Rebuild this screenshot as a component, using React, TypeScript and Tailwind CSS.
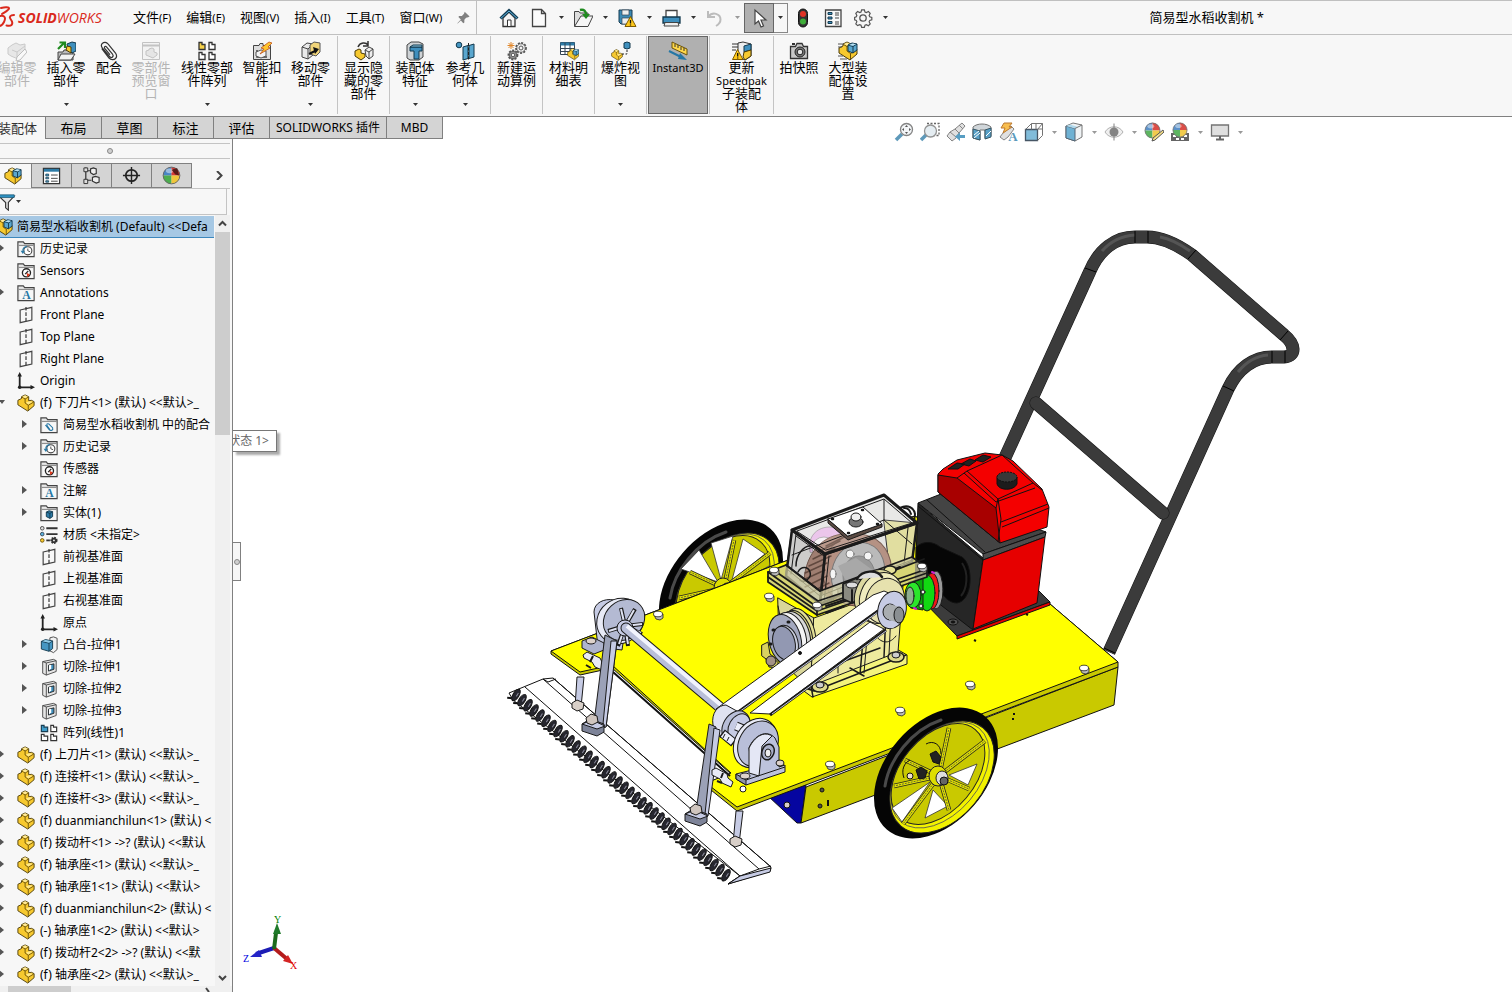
import { useState } from 'react';
import type { ReactNode } from 'react';
import clsx from 'clsx';

type IconProps = { name: string; size?: number };

const Cube = () => (
  <>
    <path d="M10 4l4-2 5 1v6l-4 3-5-2z" fill="#5aa7cf" stroke="#12384d" />
    <path d="M10 4l5 1.500 4-2.500M15 5.500V12" fill="none" stroke="#12384d" />
    <path d="M11 4l4-1.500 3 .8-3 1.500z" fill="#b9e0f2" />
  </>
);

const PartShape = () => (
  <>
    <path d="M1 7l4-2V3l4-2 4 2v4.500L16 7l3 1.500V13l-7 6L1 12z" fill="#f7c92f" stroke="#4a3a08" strokeLinejoin="round" />
    <path d="M5.500 3.500L9 5.500v4.500l3.500 2.500L18.500 9M12.500 12.500V18M9 5.500L12.500 3.500" fill="none" stroke="#6b5208" />
    <path d="M6 3l3-1.500L12 3 9 4.800z" fill="#ffeb9a" />
    <path d="M10 9.500l3.500-1.500 4 .5-5 3.200z" fill="#ffe98c" />
  </>
);

const FolderShape = () => (
  <>
    <path d="M1 18.500V2H7L8.500 4H19V18.500z" fill="#e8e8e8" stroke="#444" strokeWidth="1.300" />
    <path d="M2 6h16" stroke="#777" />
    <path d="M3 7h15v10.500H3z" fill="#f7f7f7" />
  </>
);

const Ball = () => (
  <>
    <path d="M10 10V1a9 9 0 0 0-9 9z" fill="#4a86c5" />
    <path d="M10 10V1a9 9 0 0 1 9 9z" fill="#d83a34" />
    <path d="M10 10H1a9 9 0 0 0 9 9z" fill="#4cae4f" />
    <path d="M10 10h9a9 9 0 0 1-9 9z" fill="#f0c63a" />
    <circle cx="10" cy="10" r="8.800" fill="none" stroke="#666" />
    <ellipse cx="8" cy="5" rx="4" ry="2.500" fill="#fff" opacity=".45" />
  </>
);

const GearShape = ({ x, y, s, fill }: { x: number; y: number; s: number; fill: string }) => (
  <g>
    <circle cx={x} cy={y} r={s} fill={fill} stroke="#555" strokeWidth="1.800" strokeDasharray="2 1.300" />
    <circle cx={x} cy={y} r={s - 0.800} fill={fill} stroke="#555" strokeWidth=".8" />
    <circle cx={x} cy={y} r={s / 2.500} fill="#f7f7f7" stroke="#555" />
  </g>
);

const ICONS: Record<string, ReactNode> = {
  part: <PartShape />,
  assembly: (
    <>
      <PartShape />
      <Cube />
    </>
  ),
  editPart: (
    <g opacity=".35">
      <path d="M1 7l4-3 4-2 4 2 5-1v10l-7 5-7-3-3-2z" fill="#ccc" stroke="#777" />
      <path d="M5 9l5 2v6M10 11l8-6" fill="none" stroke="#777" />
      <path d="M18 8l-8 8-1 4 4-1 7-8z" fill="#fff" stroke="#555" />
    </g>
  ),
  insertPart: (
    <>
      <path d="M2 19V11h5l1-2h6l1 2h2v8z" fill="#bbb" stroke="#444" />
      <path d="M2 19l3-6h14l-4 6z" fill="#f2f2f2" stroke="#444" />
      <path d="M2 8l6-6M3.500 1.500H9V7" fill="none" stroke="#1f8a1f" strokeWidth="2.200" />
      <path d="M11 3l5-2 4 1v8l-4 2-4-4z" fill="#3f8fbd" stroke="#12384d" />
      <path d="M11 5l4 1v6l-5-3z" fill="#f7c92f" stroke="#4a3a08" />
    </>
  ),
  clip: (
    <path
      d="M3 8l7 9c2 2 5 2 6.500.5 1.500-1.500 1.300-3.500 0-5.500L9 3C7.500 1 5 .8 3.500 2.200c-1.500 1.300-1.300 3.300 0 5l7 8.300c1 1.200 2.200 1.300 3 .5.900-.8.800-1.900 0-3L7.500 6C7 5.300 6.200 5.200 5.700 5.700c-.5.500-.4 1.100 0 1.700l5 6"
      fill="none"
      stroke="#333"
      strokeWidth="1.200"
      strokeLinecap="round"
    />
  ),
  preview: (
    <g opacity=".4">
      <path d="M1.500 1.500h17v17h-17z" fill="#eee" stroke="#777" />
      <path d="M2 4.500h16" stroke="#777" strokeWidth="2" />
      <path d="M5 10l3-1V8l3-1 2 1v3l3 1v2l-4 3-7-3z" fill="#ccc" stroke="#777" />
    </g>
  ),
  pattern: (
    <>
      <path d="M2 1.500h3v2h3v5H2z" fill="#f7d24a" stroke="#333" strokeWidth="1.300" />
      <path d="M12 1.500h3v2h3v5h-6zM2 11.500h3v2h3v5H2zM12 11.500h3v2h3v5h-6z" fill="#fff" stroke="#333" strokeWidth="1.300" />
    </>
  ),
  linearPattern: (
    <>
      <path d="M1.500 1.500h3v2h4v5h-7z" fill="#3f9cc9" stroke="#173d52" strokeWidth="1.300" />
      <path d="M12 1.500h3v2h3.500v5H12zM1.500 11.500h3v2h4v5h-7zM12 11.500h3v2h3.500v5H12z" fill="#fff" stroke="#333" strokeWidth="1.300" />
    </>
  ),
  fastener: (
    <>
      <path d="M1.500 18.500V4.500H7l1-2h3v2h7.500v14z" fill="#ddd" stroke="#444" />
      <path d="M5 9v7h10" fill="none" stroke="#444" strokeWidth="1.500" />
      <path d="M4 11l5-2 5 1v5l-5 2-5-2z" fill="#f4f4f4" stroke="#555" />
      <path d="M17 1l3 1-4 4 2 1-10 6 4-5-3-1z" fill="#ffc62c" stroke="#c0501a" strokeWidth=".8" />
    </>
  ),
  move: (
    <>
      <path d="M1 6l5-4 6 1v11l-5 4-6-2z" fill="#e9e9e9" stroke="#444" />
      <path d="M1 6l6 2 5-5M7 8v10" fill="none" stroke="#444" />
      <path d="M9 4l4-3 6 1v9l-4 4-6-2z" fill="#f1d57a" stroke="#555" />
      <path d="M8 13l8-4" fill="none" stroke="#111" strokeWidth="2" />
      <path d="M12 6l6 2-4 5z" fill="#111" />
    </>
  ),
  showHide: (
    <>
      <path d="M4 6c2-5 8-5 10-2M14 0v5H9" fill="none" stroke="#333" strokeWidth="1.500" />
      <path d="M1 10l4-2 2 1v3l4 1v3l-4 3-6-4z" fill="#f7c92f" stroke="#4a3a08" />
      <path d="M11 9l4-3 4 2v7l-4 3-3-3z" fill="#eee" stroke="#444" />
      <path d="M15 11v7M11 9l4 2 4-3" fill="none" stroke="#444" />
    </>
  ),
  feature: (
    <>
      <path d="M2 4l4-3h8l4 2v13l-4 3H5l-3-2z" fill="#cfd3d6" stroke="#444" />
      <path d="M5 6h12v4h-3v8H9v-8H5z" fill="#3f8fbd" stroke="#12384d" />
      <path d="M5 6l3-2h9v2z" fill="#93cbe6" stroke="#12384d" />
    </>
  ),
  reference: (
    <>
      <circle cx="4" cy="4" r="2.800" fill="#4596c2" stroke="#12384d" />
      <path d="M8 6l5-1.500v13L8 19z" fill="#5aa7cf" stroke="#12384d" />
      <path d="M14 4.500L19 3v13l-5 1.500z" fill="#5aa7cf" stroke="#12384d" />
      <path d="M13.500 2v18" stroke="#222" strokeDasharray="3 1.500" />
    </>
  ),
  motion: (
    <>
      <GearShape x={14} y={7} s={5} fill="#f4f4f4" />
      <GearShape x={6} y={14} s={4.500} fill="#999" />
      <path d="M4 1v7M.5 4.500h7M1.500 2l5 5M6.500 2l-5 5" stroke="#e0862a" />
    </>
  ),
  bom: (
    <>
      <path d="M1.500 1.500h14v12h-14z" fill="#fff" stroke="#345" />
      <path d="M1.500 1.500h14v3h-14z" fill="#2d7ba6" />
      <path d="M1.500 7.500h14M1.500 10.500h14M6 2v11M11 2v11" stroke="#345" />
      <g transform="translate(8 7) scale(.62)">
        <PartShape />
        <Cube />
      </g>
    </>
  ),
  explode: (
    <>
      <g transform="translate(0 8) scale(.6)">
        <PartShape />
      </g>
      <path d="M13 2l3-1 3 1v5l-3 1-3-1z" fill="#3f8fbd" stroke="#12384d" />
      <path d="M16 9v4h-5" fill="none" stroke="#222" strokeDasharray="2 1.500" />
    </>
  ),
  instant: (
    <>
      <path d="M4 1l15 7v6L4 7z" fill="#ffd84a" stroke="#6b5208" />
      <path d="M7 3v3M10 4v3M13 6v3M16 7v3" stroke="#333" />
      <path d="M1 10l12 6" stroke="#2577a5" strokeWidth="2" />
      <path d="M12 12l7 7-9-1z" fill="#2577a5" />
    </>
  ),
  update: (
    <>
      <path d="M6 2l5-1 8 2v12l-6 4-7-3z" fill="#eee" stroke="#333" />
      <path d="M12 5l7-2v6l-7 2z" fill="#3f8fbd" stroke="#12384d" />
      <path d="M12 11l7-2v6l-6 4-2-3z" fill="#f7c92f" stroke="#4a3a08" />
      <path d="M0 3h6M0 6h6M0 9h4" stroke="#333" />
      <path d="M5.500 8.500L11 18.500H.5z" fill="#ffc91a" stroke="#7d5b00" />
      <path d="M5.700 12v3.500M5.700 16.500v1" stroke="#111" strokeWidth="1.300" />
    </>
  ),
  camera: (
    <>
      <path d="M1.500 5.500h5l1.500-3h5l1.500 3h4v12h-17z" fill="#c8c8c8" stroke="#333" strokeWidth="1.300" />
      <circle cx="11" cy="11" r="5" fill="#777" stroke="#222" />
      <circle cx="11" cy="11" r="2.800" fill="#e4e4e4" stroke="#222" />
      <path d="M3 3h3" stroke="#333" strokeWidth="2" />
    </>
  ),
  large: (
    <>
      <PartShape />
      <Cube />
      <path d="M0 3h6M0 6h4M0 15h5M2 18h7" stroke="#555" />
    </>
  ),
  home: (
    <>
      <path d="M4 10v8.500h12V10L10 4z" fill="#f4f4f4" stroke="#333" strokeWidth="1.300" />
      <path d="M8.500 18v-6h3.500v6" fill="#fff" stroke="#333" />
      <path d="M1.500 10.500L10 2.500l8.500 8" fill="none" stroke="#123c54" strokeWidth="3" />
      <path d="M2 10.200L10 3l8 7.200" fill="none" stroke="#5fb3dc" />
    </>
  ),
  newFile: <path d="M3.500 1.500h9l4 4v13h-13zM12.500 1.500v4h4" fill="#fbfbfb" stroke="#444" strokeWidth="1.300" />,
  open: (
    <>
      <path d="M1.500 18V3.500H6L7 5h8v13z" fill="#ddd" stroke="#444" />
      <path d="M1.500 18.500L8 8h12l-5 10.500z" fill="#f6f6f6" stroke="#444" />
      <path d="M7 2c4-1 6 1 6 5" fill="none" stroke="#1f8a1f" strokeWidth="2.500" />
      <path d="M9 6h8l-4 5z" fill="#1f8a1f" />
    </>
  ),
  save: (
    <>
      <path d="M2 2h13v14H4l-2-2z" fill="#3d8ab5" stroke="#173d52" />
      <path d="M5 2h7v5H5zM5 10h8v6H5z" fill="#eee" stroke="#345" strokeWidth=".7" />
      <path d="M13.500 8.500L19 18.500H8z" fill="#ffc91a" stroke="#7d5b00" />
      <path d="M13.500 12v3.500M13.500 16.500v1" stroke="#111" strokeWidth="1.300" />
    </>
  ),
  print: (
    <>
      <path d="M5 2.500h11v8H5z" fill="#fff" stroke="#444" strokeWidth="1.300" />
      <path d="M2 9h17v6H2z" fill="#3f8fbd" stroke="#12384d" strokeWidth="1.300" />
      <path d="M4 14.500h13l1 3.500H3z" fill="#eee" stroke="#444" />
    </>
  ),
  undo: <path d="M3 3v6h7M3.500 8.500c4-5 12-3 12 3 0 3-2 5-4.500 6.500" fill="none" stroke="#bcbcbc" strokeWidth="2" />,
  cursor: <path d="M6 2v14l3.500-3 2.500 6 2.500-1-2.500-6H17z" fill="#fff" stroke="#444" strokeWidth="1.200" />,
  traffic: (
    <>
      <rect x="5.500" y="1" width="9" height="18" rx="4.500" fill="#333" stroke="#111" />
      <circle cx="10" cy="6" r="3" fill="#e03326" />
      <circle cx="10" cy="13.500" r="3" fill="#3fae39" />
    </>
  ),
  list: (
    <>
      <path d="M2.500 2h15.500v16.500H2.500z" fill="#f8f8f8" stroke="#444" strokeWidth="1.300" />
      <path d="M5 4.500h4v2H5zM5 9h4v2H5zM5 13.500h4v2H5z" fill="#3f8fbd" stroke="#173d52" />
      <path d="M12 5h4M12 7h4M12 10h4M12 14h4M12 16h4" stroke="#444" />
    </>
  ),
  property: (
    <>
      <path d="M1.500 2.500h17v16h-17z" fill="#fff" stroke="#333" strokeWidth="1.300" />
      <path d="M2 3h16v3H2z" fill="#2d7ba6" />
      <path d="M4 8.500h3v2H4zM4 12h3v1.500H4zM4 15.500h3v1.500H4z" fill="#5aa7cf" stroke="#173d52" strokeWidth=".8" />
      <path d="M9.500 9.500h7M9.500 13h7M9.500 16h7" stroke="#444" />
    </>
  ),
  gear: (
    <>
      <path
        d="M8.500 1.500h3l.7 2.400 1.500.7 2.300-1.200 2 2-1.200 2.300.7 1.500 2.300.8v2.500l-2.300.8-.7 1.500 1.200 2.300-2 2-2.300-1.200-1.500.7-.7 2.300h-3l-.7-2.300-1.500-.7L4 19l-2-2 1.200-2.300-.7-1.500L.7 12.500V10l1.800-.8.7-1.500L2 5.400l2-2 2.300 1.200 1.500-.7z"
        fill="#f7f7f7"
        stroke="#555"
        strokeWidth="1.300"
        transform="translate(1 .5) scale(.9)"
      />
      <circle cx="10" cy="10" r="3.200" fill="none" stroke="#555" strokeWidth="1.300" />
    </>
  ),
  pin: (
    <path d="M11 1l7 7-2 1-3 .5-2.500 3 0 4-1.500 1-3.500-4L1 18l-.5-.5L5.500 12 2 8.500l1-1.500h4l3-3z" fill="#808080" />
  ),
  config: (
    <>
      <path d="M4 1.500v17M4 5h6M4 15h6" stroke="#333" strokeWidth="1.300" />
      <path d="M2 2h4v4H2zM2 14h4v4.500H2z" fill="#ddd" stroke="#333" />
      <path d="M9 3l3-1 3 1v5l-3 1-3-2zM11 12l3-1 4 1v5l-3 1-4-2z" fill="#eee" stroke="#333" strokeWidth="1.200" />
    </>
  ),
  target: (
    <>
      <circle cx="10" cy="10" r="6" fill="none" stroke="#222" strokeWidth="1.800" />
      <path d="M10 1v18M1 10h18" stroke="#222" strokeWidth="1.500" />
    </>
  ),
  ball: (
    <>
      <Ball />
      <path d="M10 4l6-2 2 8-4-1z" fill="#3a1414" opacity=".8" />
    </>
  ),
  filter: (
    <>
      <path d="M1 3.500h17l-6.500 7V19l-3-2.500v-6z" fill="#e6e6e6" stroke="#333" strokeWidth="1.300" />
      <path d="M1 2h17v3H1z" fill="#2d8fc0" stroke="#17546f" strokeWidth=".8" />
    </>
  ),
  history: (
    <>
      <FolderShape />
      <circle cx="12" cy="12" r="4.500" fill="#fff" stroke="#444" strokeWidth="1.200" />
      <path d="M12 9.500V12l2.500 1" fill="none" stroke="#444" />
      <path d="M4 12h5l-2.500 3.500z" fill="#2d7ba6" />
      <path d="M6.500 12c0-3 2-4.500 4.500-5" fill="none" stroke="#2d7ba6" strokeWidth="1.500" />
    </>
  ),
  sensor: (
    <>
      <FolderShape />
      <circle cx="10.500" cy="12" r="4.500" fill="#fff" stroke="#222" strokeWidth="1.500" />
      <path d="M10.500 12l4 2-3 3z" fill="#e03a1e" />
      <path d="M9 13.500l3.500-3.500" stroke="#222" strokeWidth="1.300" />
    </>
  ),
  annotation: (
    <>
      <FolderShape />
      <text x="10.500" y="17" textAnchor="middle" fontSize="13" fontWeight="700" fontFamily="Liberation Serif, serif" fill="#2577a5">
        A
      </text>
    </>
  ),
  mates: (
    <>
      <FolderShape />
      <path d="M6 10l4 5c2 2 5 1 4-2l-4-4c-2-1-3 0-2 2l3 4" fill="none" stroke="#2577a5" strokeWidth="1.200" />
    </>
  ),
  bodies: (
    <>
      <FolderShape />
      <path d="M7 9l3-1.500 4 1V14l-3 2-4-2z" fill="#2d7ba6" stroke="#12384d" />
      <path d="M7 9l4 1.500 3-2M11 10.500V16" fill="none" stroke="#12384d" />
    </>
  ),
  material: (
    <>
      <path d="M7 2.500h12.500M7 9h12.500" stroke="#333" strokeWidth="2" />
      <circle cx="2.500" cy="2.500" r="2" fill="#ddd" stroke="#444" />
      <circle cx="2.500" cy="9" r="2" fill="#5ab0dc" stroke="#345" />
      <circle cx="2.500" cy="16" r="2" fill="#f7c92f" stroke="#6b5208" />
      <path d="M7 16h4" stroke="#333" strokeWidth="2" />
      <circle cx="15.500" cy="16" r="3" fill="#333" stroke="#333" strokeWidth="2" strokeDasharray="1.800 1" />
      <circle cx="15.500" cy="16" r="1" fill="#f7f7f7" />
    </>
  ),
  plane: (
    <>
      <path d="M3.500 4.500L16.500 1.500v14L3.500 18.500z" fill="none" stroke="#444" strokeWidth="1.300" />
      <path d="M10 1v18" stroke="#333" strokeDasharray="4 2" strokeWidth="1.300" />
    </>
  ),
  origin: (
    <>
      <path d="M3 3v14h14" fill="none" stroke="#222" strokeWidth="2" />
      <path d="M3 0l2.500 5H.5zM20 17l-5 2.500v-5z" fill="#222" />
      <circle cx="3" cy="17" r="2" fill="#222" />
    </>
  ),
  boss: (
    <>
      <path d="M11 2l4-1 4 1.500V15l-4 3.500-4-2z" fill="#f1f1f1" stroke="#444" />
      <path d="M1.500 6L6 4l8 1.500V14l-4 3-8.500-2.500z" fill="#4596c2" stroke="#12384d" />
      <path d="M1.500 6l8.500 2 4-2.500M10 8v9" fill="none" stroke="#12384d" />
      <path d="M2.500 5.800L6 4.400l7 1.300-3 1.900z" fill="#93cbe6" />
    </>
  ),
  cut: (
    <>
      <path d="M3 4l12-2.500L18 3v12L7 19l-4-2z" fill="#e6e6e6" stroke="#444" />
      <path d="M3 4l4 1.500L18 3M7 5.500V19" fill="none" stroke="#444" />
      <path d="M9.500 8l6-1.500v6l-6 2z" fill="#3f8fbd" stroke="#222" />
      <path d="M10 8l2.500-.5v4L10 14z" fill="#fff" />
    </>
  ),
  zoomFit: (
    <>
      <path d="M2 18l6-6" stroke="#4d8fb3" strokeWidth="3.500" />
      <circle cx="12.500" cy="7.500" r="6" fill="#f2f5f7" stroke="#777" strokeWidth="1.300" />
      <path d="M12.500 3l1.500 2h-3zM12.500 12l1.500-2h-3zM8 7.500l2-1.500v3zM17 7.500l-2-1.500v3z" fill="#444" />
    </>
  ),
  zoomArea: (
    <>
      <path d="M7 1.500h12v12h-6" fill="none" stroke="#555" strokeDasharray="2 1.500" strokeWidth="1.300" />
      <path d="M1 18l5-5" stroke="#4d8fb3" strokeWidth="3.500" />
      <circle cx="10.500" cy="9" r="6" fill="#e3ecf1" stroke="#888" strokeWidth="1.300" />
    </>
  ),
  prevView: (
    <>
      <path d="M1 14l3-4 5-3 7-6 3 3-6 7-3 5-4 3z" fill="#ddd" stroke="#777" />
      <path d="M4 10l6 5M9 7l4 4M13 3l4 4" stroke="#777" />
      <path d="M9 14.500l5-4v2.500h5v3h-5V19z" fill="#4694bd" />
    </>
  ),
  section: (
    <>
      <path d="M1 5c4-4 14-4 18 0v9l-6 2V8H8v10l-7-2z" fill="#ccd2d6" stroke="#666" />
      <path d="M1 7l7 2v9l-7-2zM13 8l6-2v9l-6 2z" fill="#4596c2" stroke="#245" />
      <path d="M2 13l5-4M2 16l6-5M14 14l5-5" stroke="#fff" />
    </>
  ),
  dynamic: (
    <>
      <path d="M2 15l3-4 8-7 3 3-6 8-4 3z" fill="#ddd" stroke="#777" />
      <path d="M6 1h8l-3 4h3l-9 6 2-5H3z" fill="#f8b83d" stroke="#b56b1a" />
      <text x="15" y="19" textAnchor="middle" fontSize="13" fontWeight="700" fontFamily="Liberation Serif, serif" fill="#4a8fb5">
        A
      </text>
    </>
  ),
  orient: (
    <>
      <path d="M1.500 7.500h12v11h-12z" fill="#74b5d6" stroke="#345" strokeWidth="1.300" />
      <path d="M1.500 7.500l6-6h11v12l-5 5M13.500 7.500l5-6M7.500 1.500v6M12 1.500v6M18 7h-4" fill="none" stroke="#666" />
    </>
  ),
  display: (
    <>
      <path d="M2 4l7-3 9 2v12l-7 4-9-3z" fill="#eef2f4" stroke="#666" />
      <path d="M2 4l9 2.500V19l-9-3z" fill="#5fa9cf" stroke="#456" />
      <path d="M6 2.500l8 2.500-3 1.500L2 4z" fill="#a9d5ea" />
      <path d="M11 6.500L18 3" stroke="#666" />
    </>
  ),
  eye: (
    <>
      <path d="M1 10c4-7 14-7 18 0-4 7-14 7-18 0z" fill="#eee" stroke="#aaa" />
      <circle cx="10" cy="10" r="4.500" fill="#777" />
      <path d="M10 1.500v17" stroke="#777" />
    </>
  ),
  appearance: (
    <>
      <g transform="scale(.85)">
        <Ball />
      </g>
      <path d="M19 8l1 2-9 8-3 1 1-3z" fill="#f7dd7a" stroke="#444" />
    </>
  ),
  scene: (
    <>
      <path d="M1 11h18v8H1z" fill="#555" />
      <path d="M3 13h3v2H3zM14 13h3v2h-3zM6 16h3v2H6zM11 16h3v2h-3z" fill="#fff" />
      <g transform="translate(2 0) scale(.8)">
        <Ball />
      </g>
    </>
  ),
  monitor: (
    <>
      <path d="M1.500 3h17v11h-17z" fill="#dcdcdc" stroke="#666" strokeWidth="1.300" />
      <path d="M10 14v3M6 17.500h8" stroke="#555" strokeWidth="2" />
    </>
  ),
};

const Icon = ({ name, size = 20 }: IconProps) => (
  <svg width={size} height={size} viewBox="0 0 20 20" className="shrink-0" aria-hidden="true">
    {ICONS[name]}
  </svg>
);

const Caret = ({ light = false }: { light?: boolean }) => (
  <svg width="5" height="3" viewBox="0 0 5 3" className="shrink-0" aria-hidden="true">
    <path d="M0 0h5L2.500 3z" fill={light ? '#999' : '#333'} />
  </svg>
);

const MENUS = [
  ['文件', '(F)'],
  ['编辑', '(E)'],
  ['视图', '(V)'],
  ['插入', '(I)'],
  ['工具', '(T)'],
  ['窗口', '(W)'],
];

const QUICK = [
  { icon: 'home', label: 'Home' },
  { icon: 'newFile', label: 'New', menu: true },
  { icon: 'open', label: 'Open', menu: true },
  { icon: 'save', label: 'Save', menu: true },
  { icon: 'print', label: 'Print', menu: true },
  { icon: 'undo', label: 'Undo', menu: true, off: true },
  { icon: 'cursor', label: 'Select', menu: true, active: true },
  { icon: 'traffic', label: 'Rebuild' },
  { icon: 'list', label: 'File properties' },
  { icon: 'gear', label: 'Options', menu: true },
];

const TitleBar = () => (
  <header className="flex h-[35px] shrink-0 items-center border-y border-[#c0c0c0] bg-[#f7f7f7]">
    <div className="flex w-[125px] shrink-0 items-center text-[#da291c]">
      <svg width="16" height="24" viewBox="0 0 16 24" className="mr-[2px] shrink-0" aria-hidden="true">
        <g fill="none" stroke="#da291c" strokeWidth="2" strokeLinecap="round">
          <path d="M1 2c4-1 8-1 8 .5S5 6 2 8" />
          <path d="M0 10c5-1 6 2 4 6-1 2-3 4-5 4" />
          <path d="M14 9c-4 0-5 2-3.500 4s3 4 1 6c-1 1-3 1-5 .5" />
        </g>
      </svg>
      <span className="font-['Open_Sans',sans-serif] text-[14px] italic">
        <b>SOLID</b>WORKS
      </span>
    </div>
    <nav className="flex w-[352px] shrink-0 items-center gap-[15px] self-stretch border-r border-[#c0c0c0] pl-2">
      {MENUS.map(([label, key]) => (
        <button key={key} className="shrink-0 whitespace-nowrap text-[13px]">
          {label}
          <span className="text-[11px]">{key}</span>
        </button>
      ))}
      <button aria-label="Pin">
        <Icon name="pin" size={14} />
      </button>
    </nav>
    <div className="ml-[17px] flex shrink-0">
      {QUICK.map(item => (
        <div key={item.icon} className="flex">
          <button
            aria-label={item.label}
            className={clsx('flex h-[30px] w-[30px] items-center justify-center', item.active && 'border border-[#666] bg-[#b0b0b0]')}
          >
            <Icon name={item.icon} />
          </button>
          {item.menu && (
            <button
              aria-label={`${item.label} menu`}
              className={clsx('flex h-[30px] w-[14px] items-center justify-center', item.active && 'border border-l-0 border-[#888]')}
            >
              <Caret light={item.off} />
            </button>
          )}
        </div>
      ))}
    </div>
    <h1 className="mr-[248px] ml-auto whitespace-nowrap text-[13px]">简易型水稻收割机 *</h1>
  </header>
);

type Command = { icon: string; lines: string[]; w: string; menu?: boolean; off?: boolean; sep?: boolean; active?: boolean };

const COMMANDS: Command[] = [
  { icon: 'editPart', lines: ['编辑零', '部件'], w: '-ml-2 w-[50px]', off: true },
  { icon: 'insertPart', lines: ['插入零', '部件'], w: 'w-[48px]', menu: true },
  { icon: 'clip', lines: ['配合'], w: 'w-[38px]' },
  { icon: 'preview', lines: ['零部件', '预览窗', '口'], w: 'w-[46px]', off: true },
  { icon: 'pattern', lines: ['线性零部', '件阵列'], w: 'w-[66px]', menu: true },
  { icon: 'fastener', lines: ['智能扣', '件'], w: 'w-[44px]' },
  { icon: 'move', lines: ['移动零', '部件'], w: 'w-[53px]', menu: true, sep: true },
  { icon: 'showHide', lines: ['显示隐', '藏的零', '部件'], w: 'w-[51px]', sep: true },
  { icon: 'feature', lines: ['装配体', '特征'], w: 'w-[50px]', menu: true },
  { icon: 'reference', lines: ['参考几', '何体'], w: 'w-[50px]', menu: true, sep: true },
  { icon: 'motion', lines: ['新建运', '动算例'], w: 'w-[51px]', sep: true },
  { icon: 'bom', lines: ['材料明', '细表'], w: 'w-[51px]', sep: true },
  { icon: 'explode', lines: ['爆炸视', '图'], w: 'w-[51px]', menu: true, sep: true },
  { icon: 'instant', lines: ['Instant3D'], w: 'ml-px mr-px w-[60px]', active: true, sep: true },
  { icon: 'update', lines: ['更新', 'Speedpak', '子装配', '体'], w: 'w-[63px]', sep: true },
  { icon: 'camera', lines: ['拍快照'], w: 'w-[50px]' },
  { icon: 'large', lines: ['大型装', '配体设', '置'], w: 'w-[48px]' },
];

const Ribbon = () => (
  <div className="flex h-[82px] shrink-0 border-b border-[#808080] bg-[#f7f7f7] pt-px pb-[2px]">
    {COMMANDS.map(cmd => (
      <div key={cmd.icon} className={clsx('flex shrink-0', cmd.sep && 'border-r border-[#c4c4c4]')}>
        <button
          disabled={cmd.off}
          className={clsx(
            'flex flex-col items-center whitespace-nowrap text-[13px] leading-[13px]',
            cmd.w,
            cmd.active ? 'border border-[#666] bg-[#b0b0b0] pt-1' : 'pt-[5px]',
            cmd.off && 'text-[#b4b4b4]',
          )}
        >
          <Icon name={cmd.icon} />
          {cmd.lines.map(line => (
            <span key={line} className={clsx('block', /^[A-Z]/.test(line) && 'text-[11px]')}>
              {line}
            </span>
          ))}
          {cmd.menu && (
            <span className="mt-auto pb-2">
              <Caret />
            </span>
          )}
        </button>
      </div>
    ))}
  </div>
);

const TABS = [
  { label: '装配体', w: 'w-[46px] pr-2 justify-end' },
  { label: '布局', w: 'w-[56px]' },
  { label: '草图', w: 'w-[56px]' },
  { label: '标注', w: 'w-[56px]' },
  { label: '评估', w: 'w-[56px]' },
  { label: 'SOLIDWORKS 插件', w: 'w-[117px]' },
  { label: 'MBD', w: 'w-[56px]' },
];

const VIEW_TOOLS = [
  { icon: 'zoomFit', label: 'Zoom to fit' },
  { icon: 'zoomArea', label: 'Zoom to area' },
  { icon: 'prevView', label: 'Previous view' },
  { icon: 'section', label: 'Section view' },
  { icon: 'dynamic', label: 'Dynamic annotation views' },
  { icon: 'orient', label: 'View orientation', menu: true },
  { icon: 'display', label: 'Display style', menu: true },
  { icon: 'eye', label: 'Hide or show items', menu: true },
  { icon: 'appearance', label: 'Edit appearance' },
  { icon: 'scene', label: 'Apply scene', menu: true },
  { icon: 'monitor', label: 'View settings', menu: true },
];

const TabRow = () => {
  const [active, setActive] = useState('装配体');
  return (
    <div className="flex h-[22px] shrink-0 bg-white">
      {TABS.map(tab => (
        <button
          key={tab.label}
          onClick={() => setActive(tab.label)}
          className={clsx(
            'flex shrink-0 items-center justify-center whitespace-nowrap border-r border-[#808080] text-[13px] leading-5',
            tab.w,
            active === tab.label ? 'bg-[#f7f7f7] text-[#333]' : 'border-b bg-[#d4d4d4]',
          )}
        >
          <span className={tab.label.charCodeAt(0) < 128 ? 'text-[12px]' : undefined}>{tab.label}</span>
        </button>
      ))}
      <div className="z-10 mr-[265px] ml-auto flex h-[30px] shrink-0 items-center">
        {VIEW_TOOLS.map(tool => (
          <div key={tool.icon} className="flex items-center">
            <button aria-label={tool.label} className="flex w-[26px] justify-center opacity-90">
              <Icon name={tool.icon} />
            </button>
            {tool.menu && (
              <button aria-label={`${tool.label} menu`} className="flex h-5 w-[14px] items-center justify-center">
                <Caret light />
              </button>
            )}
          </div>
        ))}
      </div>
    </div>
  );
};

type Node = { icon: string; text: string; level?: number; arrow?: 'open' | 'closed' };

const STATE = '(默认) <<默认>_';

const NODES: Node[] = [
  { icon: 'history', text: '历史记录', arrow: 'closed' },
  { icon: 'sensor', text: 'Sensors' },
  { icon: 'annotation', text: 'Annotations', arrow: 'closed' },
  { icon: 'plane', text: 'Front Plane' },
  { icon: 'plane', text: 'Top Plane' },
  { icon: 'plane', text: 'Right Plane' },
  { icon: 'origin', text: 'Origin' },
  { icon: 'part', text: `(f) 下刀片<1> ${STATE}`, arrow: 'open' },
  { icon: 'mates', text: '简易型水稻收割机 中的配合', level: 1, arrow: 'closed' },
  { icon: 'history', text: '历史记录', level: 1, arrow: 'closed' },
  { icon: 'sensor', text: '传感器', level: 1 },
  { icon: 'annotation', text: '注解', level: 1, arrow: 'closed' },
  { icon: 'bodies', text: '实体(1)', level: 1, arrow: 'closed' },
  { icon: 'material', text: '材质 <未指定>', level: 1 },
  { icon: 'plane', text: '前视基准面', level: 1 },
  { icon: 'plane', text: '上视基准面', level: 1 },
  { icon: 'plane', text: '右视基准面', level: 1 },
  { icon: 'origin', text: '原点', level: 1 },
  { icon: 'boss', text: '凸台-拉伸1', level: 1, arrow: 'closed' },
  { icon: 'cut', text: '切除-拉伸1', level: 1, arrow: 'closed' },
  { icon: 'cut', text: '切除-拉伸2', level: 1, arrow: 'closed' },
  { icon: 'cut', text: '切除-拉伸3', level: 1, arrow: 'closed' },
  { icon: 'linearPattern', text: '阵列(线性)1', level: 1 },
  { icon: 'part', text: `(f) 上刀片<1> ${STATE}`, arrow: 'closed' },
  { icon: 'part', text: `(f) 连接杆<1> ${STATE}`, arrow: 'closed' },
  { icon: 'part', text: `(f) 连接杆<3> ${STATE}`, arrow: 'closed' },
  { icon: 'part', text: '(f) duanmianchilun<1> (默认) <', arrow: 'closed' },
  { icon: 'part', text: '(f) 拨动杆<1> ->? (默认) <<默认', arrow: 'closed' },
  { icon: 'part', text: `(f) 轴承座<1> ${STATE}`, arrow: 'closed' },
  { icon: 'part', text: '(f) 轴承座1<1> (默认) <<默认>', arrow: 'closed' },
  { icon: 'part', text: '(f) duanmianchilun<2> (默认) <', arrow: 'closed' },
  { icon: 'part', text: '(-) 轴承座1<2> (默认) <<默认>', arrow: 'closed' },
  { icon: 'part', text: '(f) 拨动杆2<2> ->? (默认) <<默', arrow: 'closed' },
  { icon: 'part', text: `(f) 轴承座<2> ${STATE}`, arrow: 'closed' },
];

const TreeRow = ({ node }: { node: Node }) => (
  <li className={clsx('flex h-[22px] items-center', node.level === 1 && 'pl-[23px]')}>
    <span className="flex w-[17px] shrink-0 pb-[3px]">
      {node.arrow && (
        <button aria-label="Toggle" className="-ml-px">
          <svg width="6" height="8" viewBox="0 0 6 8" aria-hidden="true">
            <path d={node.arrow === 'open' ? 'M0 2h6L3 6z' : 'M0 0l5 4-5 4z'} fill="#555" />
          </svg>
        </button>
      )}
    </span>
    <Icon name={node.icon} size={18} />
    <span className="ml-[5px] whitespace-nowrap">{node.text}</span>
  </li>
);

const PANEL_TABS = [
  { icon: 'property', label: 'Property manager' },
  { icon: 'config', label: 'Configuration manager' },
  { icon: 'target', label: 'DimXpert manager' },
  { icon: 'ball', label: 'Display manager' },
];

const Chevron = ({ d }: { d: string }) => (
  <svg width="9" height="9" viewBox="0 0 9 9" aria-hidden="true">
    <path d={d} fill="none" stroke="#444" strokeWidth="2" />
  </svg>
);

const SidePanel = () => (
  <aside className="flex w-[233px] shrink-0 flex-col border-r border-[#808080] bg-[#f7f7f7]">
    <div className="mt-1 mr-[2px] flex h-4 shrink-0 items-center justify-center border-y border-[#c4c4c4] pr-[10px]">
      <span className="size-[6px] rounded-full border border-[#888] bg-[#d0d0d0]" />
    </div>
    <div className="mt-1 mr-[2px] flex h-[26px] shrink-0 border-b border-[#c4c4c4]">
      <button aria-label="Feature manager" className="w-8 border-t border-r border-[#808080] pl-1">
        <Icon name="assembly" size={18} />
      </button>
      {PANEL_TABS.map(tab => (
        <button
          key={tab.icon}
          aria-label={tab.label}
          className="flex w-10 items-center justify-center border-t border-r border-b border-[#808080] bg-[#d4d4d4]"
        >
          <Icon name={tab.icon} size={19} />
        </button>
      ))}
      <button aria-label="More" className="ml-auto pr-[6px]">
        <Chevron d="M2 0l4.500 4.500L2 9" />
      </button>
    </div>
    <div className="mr-[5px] flex h-[26px] shrink-0 items-center gap-px border-r border-b border-[#c4c4c4]">
      <button aria-label="Filter" className="-ml-[2px] flex items-center">
        <Icon name="filter" size={18} />
        <Caret />
      </button>
    </div>
    <div className="flex min-h-0 flex-1">
      <ul className="w-[214px] shrink-0 overflow-hidden pt-px text-[12px] leading-[22px]">
        <li className="flex h-[22px] items-center border-b border-[#3c87bd] bg-[#a6c8e4]">
          <span className="-ml-[5px] flex">
            <Icon name="assembly" size={18} />
          </span>
          <span className="ml-1 whitespace-nowrap">简易型水稻收割机 (Default) &lt;&lt;Defa</span>
        </li>
        {NODES.map((node, i) => (
          <TreeRow key={i} node={node} />
        ))}
      </ul>
      <div className="ml-px flex w-[15px] flex-col items-center bg-[#f0f0f0]">
        <button aria-label="Scroll up" className="flex h-[17px] items-center">
          <Chevron d="M1 6.500L4.500 3 8 6.500" />
        </button>
        <div className="h-[203px] w-full bg-[#cdcdcd]" />
        <button aria-label="Scroll down" className="mt-auto flex h-[17px] items-center">
          <Chevron d="M1 3l3.500 3.500L8 3" />
        </button>
      </div>
    </div>
    <div className="flex h-[6px] shrink-0 items-start justify-between overflow-hidden bg-[#f0f0f0] pr-5 pl-2">
      <div className="h-full w-[63px] bg-[#cdcdcd]" />
      <Chevron d="M3 2l3 4" />
    </div>
  </aside>
);

const SPOKES =
  'M939 776L985 741M939 776L903 824M939 776L949 728M939 776L949 810M939 776L969 789M939 776L894 786M939 776L905 760';

const Wheel = ({ gaps, back = false }: { gaps: string[]; back?: boolean }) => (
  <g>
    <ellipse cx="936" cy="773" rx="75" ry="50" transform="rotate(-49 936 773)" fill="#050505" />
    <path d="M885 786c4-26 26-56 56-66" fill="none" stroke="#4a4a4a" strokeWidth="3" strokeLinecap="round" />
    <ellipse cx="942" cy="777" rx="64" ry="42" transform="rotate(-50 942 777)" fill="#f2f200" stroke="#222" />
    <ellipse cx="940" cy="775" rx="61" ry="39" transform="rotate(-50 940 775)" fill="none" stroke="#555" strokeWidth=".8" />
    <ellipse cx="938" cy="774" rx="58" ry="37" transform="rotate(-50 938 774)" fill="#c9c900" stroke="#222" />
    {gaps.map(points => (
      <polygon key={points} points={points} fill="#fff" stroke="#333" strokeWidth=".8" />
    ))}
    <path d={SPOKES} stroke="#222" strokeWidth="4.500" />
    <path d={SPOKES} stroke="#e2e200" strokeWidth="3" />
    <path d={SPOKES} stroke="#444" strokeWidth=".8" strokeDasharray="2 1" />
    {!back && (
      <g stroke="#111" fill="#222">
        <path d="M930 754l6-3 5 6-2 7-6-2zM916 770l5-3 6 4-2 7-6 1z" />
        <path d="M926 744c7-4 15 0 15 10M904 778c-3-8 0-15 6-18" fill="none" />
        <circle cx="910" cy="776" r="3" fill="#eee0d0" />
      </g>
    )}
    <ellipse cx="938" cy="776" rx="9" ry="10" fill="#dede00" stroke="#222" />
    <ellipse cx="942" cy="778" rx="6" ry="7" fill="#ddd" stroke="#222" />
    <circle cx="944" cy="781" r="4" fill="#666" stroke="#111" />
  </g>
);

const Bolt = ({ x, y }: { x: number; y: number }) => (
  <g stroke="#222" strokeWidth=".8">
    <path d={`M${x - 4} ${y}l2 4 4 1 3-2V${y - 1}z`} fill="#bbb" />
    <ellipse cx={x} cy={y - 1} rx="4.500" ry="2.800" fill="#fff" />
  </g>
);

const HANDLE =
  'M1003 462L1090 271C1099 250 1115 237 1135 237H1147C1163 237 1178 245 1192 255L1284 335C1295 344 1297 356 1284 357H1272C1254 357 1238 368 1228 389L1109 652';

const TEETH = Array.from({ length: 36 }, (_, i) => ({ x: 516 + i * 6, y: 695 + i * 5.150 }));

const Engine = () => (
  <g stroke="#111" strokeLinejoin="round">
    <polygon points="922,600 957,636 1050,602 1038,590" fill="#3c3c3c" />
    <polygon points="957,636 1050,602 1050,605 957,639" fill="#e80000" />
    <polygon points="918,503 983,558 973,630 915,585" fill="#262626" />
    <polygon points="918,503 941,494 1046,532 983,554" fill="#444" />
    <polygon points="983,554 1046,532 1045,537 983,560" fill="#4d4d4d" />
    <polygon points="983,560 1045,537 1037,603 973,629" fill="#e60000" />
    <path d="M918 506l65 54M927 500l58 52" fill="none" />
    <path d="M916 547c8-7 18-5 24 0l22 10c12 8 11 44-5 46-12 0-20-16-26-28l-15-8z" fill="#060606" />
    <path d="M962 563c7 10 5 26-1 33" fill="none" stroke="#222" strokeWidth="2" />
    <ellipse cx="953" cy="622" rx="5" ry="3" fill="#555" />
    <ellipse cx="953" cy="622" rx="2" ry="1" fill="#111" />
    <path d="M938 474l5-5 14-9 28-7 17 2 11 6 29 28 7 18-2 20-47 16-62-51z" fill="#f40000" />
    <polygon points="938,475 957,478 996,508 1000,543 938,492" fill="#a80000" />
    <path d="M957 478l10-7 35-16 31 28-35 16-31-28M998 499l-2 9M1033 483l9 7M998 499l3 20-3 23M1002 527l47-19M1001 522l47-18M964 473l32 29 39-14" fill="none" />
    <path d="M948 469l9-6 8 1-7 5zM961 464l9-5 6 2-7 5zM975 460l8-5 8 2-8 5z" fill="#222" />
    <path d="M997 477v7c2 7 17 7 20 0v-7z" fill="#1c1c1c" />
    <ellipse cx="1007" cy="477" rx="10" ry="5" fill="#383838" strokeDasharray="2 1" />
  </g>
);

const Gearbox = () => (
  <g stroke="#1a1a1a" strokeLinejoin="round" strokeLinecap="round">
    {/* output coupling */}
    <ellipse cx="936" cy="590" rx="7" ry="19" fill="#9a9a9a" />
    <ellipse cx="932" cy="591" rx="7" ry="18" fill="#f01818" />
    <ellipse cx="927" cy="593" rx="8" ry="18" fill="#12d812" />
    <path d="M909 582l14-4v32l-12-2z" fill="#08a808" />
    <ellipse cx="913" cy="595" rx="8" ry="13" fill="#2be52b" />
    <ellipse cx="910" cy="596" rx="4" ry="9" fill="#8fae8f" />
    <circle cx="923" cy="592" r="2" fill="#eee" />
    <circle cx="921" cy="606" r="2" fill="#eee" />
    <path d="M914 608l2 1M932 572l2 1" stroke="#d020d0" strokeWidth="2" />

    {/* lower housing and base */}
    <polygon points="793,683 812,697 907,664 907,655 888,644" fill="#f4f47c" />
    <polygon points="778,598 814,618 811,690 780,660" fill="#d9d69a" />
    <polygon points="814,618 903,586 898,652 811,686" fill="#eeea9e" />
    <path d="M796 685l18 6 92-36M811 686l2 11M863 640l-3 34M850 668l14 8M886 612l-2 45M820 670l60-22" fill="none" strokeWidth="1.500" />
    <path d="M867 638l-3 35M891 612l-2 43M876 636c6 8 14 8 20 0M838 655v18M778 606l8 40" fill="none" />
    <ellipse cx="820" cy="687" rx="8" ry="5" fill="#ddd98c" strokeWidth="1.500" />
    <ellipse cx="896" cy="657" rx="8" ry="5" fill="#ddd98c" strokeWidth="1.500" />
    <ellipse cx="820" cy="685" rx="4" ry="3" fill="#ccc" />
    <ellipse cx="896" cy="655" rx="4" ry="3" fill="#ccc" />

    {/* cover shell */}
    <polygon points="792,530 884,495 917,523 912,562 822,605 786,576" fill="#e3e3e0" />
    <polygon points="884,520 917,523 912,562 890,570" fill="#dedb96" />
    <path d="M810 552c-4-22 16-30 33-22l-5 14c-10-5-18 2-16 10z" fill="#e7b8e6" stroke="#888" strokeWidth=".7" />
    <ellipse cx="824" cy="548" rx="12" ry="11" fill="#f6f0f6" stroke="#888" strokeWidth=".7" />
    <path d="M804 580c2-28 20-46 42-46l14 4-30 60z" fill="#a98070" stroke="#6b4a3d" />
    <ellipse cx="857" cy="570" rx="34" ry="36" transform="rotate(20 857 570)" fill="#ad8677" stroke="#6b4a3d" />
    <path d="M805 573l22-10M803 580l22-10M805 587l22-11M808 594l21-11M809 566l22-10M813 559l22-11M818 552l22-11M826 546l18-9" stroke="#5b3c30" strokeWidth="1.500" />
    <ellipse cx="858" cy="573" rx="26" ry="31" transform="rotate(20 858 573)" fill="#b3b3b3" stroke="#666" />
    <ellipse cx="859" cy="576" rx="16" ry="20" fill="#8e8e8e" stroke="#777" />
    <path d="M838 566l18-8 22 16-10 24-16-6z" fill="#9f9f9f" stroke="none" />
    <g fill="#f4f4f4" stroke="#555" strokeWidth=".8">
      <ellipse cx="850" cy="554" rx="4" ry="4" />
      <ellipse cx="868" cy="556" rx="4" ry="4" />
      <ellipse cx="833" cy="574" rx="3" ry="5" />
      <ellipse cx="835" cy="592" rx="3" ry="5" />
    </g>
    <polygon points="825,554 917,523 912,562 820,604" fill="#fff" fillOpacity=".1" strokeWidth="2.500" />
    <polygon points="792,530 825,554 820,604 786,576" fill="#777" fillOpacity=".2" strokeWidth="2.500" />
    <polygon points="792,530 884,495 917,523 825,554" fill="#fff" fillOpacity=".2" strokeWidth="3" />
    <path d="M797 531l87-32 28 24-86 27zM884 500v20l28 24M796 536l28 20M884 520l-92 35M788 570l32 26 92-36M796 534l-5 40M829 556l-5 46M908 528l-4 36" fill="none" />
    <path d="M796 566c0-12 8-20 14-20M798 572c3-6 10-6 12 0s-6 12-10 8" fill="none" strokeWidth="1.500" />
    <path d="M828 519v4l20 17 34-13v-3l-34 12z" fill="#5a4a42" />
    <polygon points="828,519 863,507 882,524 848,536" fill="#fff" />
    <ellipse cx="856" cy="522" rx="7" ry="5" fill="#777" />
    <ellipse cx="856" cy="517" rx="5" ry="4" fill="#eee" />
    <path d="M832 519h1M862 510h1M877 524h1M848 533h1" strokeWidth="2.500" />
    <path d="M900 508c8-4 14 0 15 6l-1 8M904 508c4 0 6 2 7 6" fill="none" strokeWidth="2" />

    {/* split flange */}
    <path d="M768 572l18-7 34 26 92-34 15 11v9l-110 38-49-33z" fill="#c9c79c" fillOpacity=".75" strokeWidth="1.800" />
    <path d="M768 572l49 35 110-38M817 606v9M768 577l49 34 110-38M772 569l46 32 42-14M880 576l44-17M786 565l34 26" fill="none" strokeWidth="1.800" />
    <path d="M843 584l14-6 9 4v14l-14 7-9-4z" fill="#8a8a80" strokeWidth="1.800" />
    <path d="M852 590v12M826 606l18-6M826 613l18-7M880 575l20-8" strokeWidth="2" />
    <ellipse cx="852" cy="585" rx="6" ry="3" fill="#ddd" />
    <ellipse cx="890" cy="570" rx="6" ry="4" fill="#e6e29a" strokeWidth="1.500" />
    <Bolt x={774} y={571} />
    <Bolt x={817} y={606} />
    <Bolt x={922} y={567} />

    {/* input bearing cap */}
    <ellipse cx="800" cy="634" rx="15" ry="26" transform="rotate(-14 800 634)" fill="#e2de94" />
    <ellipse cx="797" cy="636" rx="15" ry="26" transform="rotate(-14 797 636)" fill="#d6d28a" />
    <ellipse cx="794" cy="637" rx="16" ry="26" transform="rotate(-14 794 637)" fill="#d8d8d8" />
    <ellipse cx="790" cy="638" rx="16" ry="26" transform="rotate(-14 790 638)" fill="#f4f4f4" />
    <ellipse cx="785" cy="640" rx="16" ry="26" transform="rotate(-14 785 640)" fill="#a3a8be" />
    <ellipse cx="786" cy="643" rx="12" ry="18" transform="rotate(-14 786 643)" fill="#c9cddd" />
    <ellipse cx="784" cy="643" rx="11" ry="17" transform="rotate(-14 784 643)" fill="#9298b2" />
    <path d="M773 630h1M788 622h1M770 644h1M783 661h1" strokeWidth="3" />
    <path d="M762 645l6-3 2 12 8 6v8l-9-1-3-8-4-3z" fill="#d9d260" />
    <circle cx="771" cy="661" r="5" fill="#a39285" />

    {/* output bearing cap */}
    <ellipse cx="877" cy="596" rx="22" ry="27" transform="rotate(20 877 596)" fill="#dcd8a0" />
    <ellipse cx="881" cy="598" rx="21" ry="26" transform="rotate(20 881 598)" fill="#efebbd" />
    <ellipse cx="885" cy="601" rx="19" ry="23" transform="rotate(20 885 601)" fill="#e6e1ae" />
    <path d="M857 579c5-9 20-10 25-2" fill="#ddd" strokeWidth="2.500" />
  </g>
);

const Knife = () => (
  <g stroke="#111" strokeLinejoin="round">
    <polygon points="509,693 543,679 553,678 771,867 770,871 728,884 740,876 513,700" fill="#fff" />
    <path d="M543 679l216 190-19 7L525 687M759 869l12-3M740 876l-12 8M553 678l218 189M543 679l5 3 8-3" fill="none" />
    {TEETH.map(t => (
      <g key={t.x} transform={`translate(${t.x} ${t.y}) rotate(32)`}>
        <ellipse rx="3" ry="6.500" fill="#26262e" />
        <path d="M-2 5l-4 2" strokeWidth="2" />
        <path d="M1-3v4" stroke="#8a8a9a" />
      </g>
    ))}
    <polygon points="728,884 740,876 771,868 770,872" fill="#c6cbe4" />
  </g>
);

const Reel = () => (
  <g stroke="#1a1a1a" strokeLinejoin="round">
    {/* guide posts */}
    <path d="M577 677h7l-3 30h-6zM736 811h7l-4 33h-6z" fill="#c6cbe4" />
    <path d="M572 703l5-3 7 3-1 6-6 2-5-3zM730 839l5-3 7 3-1 6-6 2-5-3z" fill="#d8cfc8" />

    {/* left bearing */}
    <path d="M594 612c0-9 10-14 20-12l14 10-6 40-24-3z" fill="#c6cbe4" />
    <path d="M582 641l10-4 12 6v7l-10 4-12-6z" fill="#aeb4cd" />
    <ellipse cx="620" cy="621" rx="24" ry="22" transform="rotate(-38 620 621)" fill="#e8eaf6" />
    <ellipse cx="624" cy="620" rx="22" ry="19" transform="rotate(-42 624 620)" fill="#b4bad3" />
    <path d="M625 626l-4-18M625 626l10-17M625 626l18-2M625 626l17 8M625 626l3 20M625 626l-7 20M625 626l-17 5" strokeWidth="4" />
    <path d="M625 626l-4-17M625 626l9-16M625 626l17-2M625 626l16 7M625 626l3 18M625 626l-6 18M625 626l-16 5" stroke="#dfe2f2" strokeWidth="2" />
    <circle cx="625" cy="628" r="8" fill="#c6cbe4" />
    <ellipse cx="591" cy="641" rx="5" ry="3" fill="#ddd2ca" />
    <path d="M583 655l4-3 13 6 2 4 7 4-2 6-12-5-3-5-8-4z" fill="#e8eaf6" />
    <path d="M586 665l5 3M593 656l-3 6" strokeWidth="2" />

    {/* cross shaft */}
    <path d="M626 628L722 709" stroke="#1a1a1a" strokeWidth="11" strokeLinecap="round" />
    <path d="M626 628L722 709" stroke="#b9bfd9" strokeWidth="9" strokeLinecap="round" />
    <path d="M627 626L722 706" stroke="#f2f4fd" strokeWidth="4" />

    {/* left arm */}
    <polygon points="605,635 617,641 606,727 594,723" fill="#9ba1b7" />
    <path d="M611 641l6 0-11 86-8 2v-3l5-2z" fill="#c6cbe4" />
    <path d="M582 724l8-5 14 5v8l-7 4-15-5z" fill="#7d8398" />
    <path d="M582 724l10-4 13 6-8 3z" fill="#c6cbe4" />
    <path d="M586 718l5-4 6 2 1 6-6 3-5-2z" fill="#cfc5be" />

    {/* belt */}
    <polygon points="716,709 873,595 884,591 896,596 878,610 737,712 726,722" fill="#fff" />
    <path d="M737 713L878 611" stroke="#1a1a1a" strokeWidth="3" />
    <path d="M739 712L878 612" stroke="#c6cbe4" />
    <polygon points="750,713 870,622 884,629 770,714" fill="#fff" />
    <path d="M770 715L886 630" strokeWidth="3" />
    <path d="M772 714L886 631" stroke="#c6cbe4" />
    <ellipse cx="892" cy="610" rx="14" ry="19" transform="rotate(15 892 610)" fill="#c6cbe4" />
    <ellipse cx="890" cy="612" rx="7" ry="8" fill="#a9adb0" />
    <path d="M889 604l11 3v16l-11-3z" fill="#a9adb0" stroke="none" />
    <ellipse cx="899" cy="615" rx="5" ry="8" fill="#8a8f92" />
    <circle cx="800" cy="653" r="1.500" fill="#111" />

    {/* right pulley and bearing */}
    <path d="M713 725c-2-12 5-20 13-20l18 10-6 28-18-6z" fill="#dfe2f0" />
    <ellipse cx="736" cy="727" rx="13" ry="17" transform="rotate(30 736 727)" fill="#b8bed8" />
    <ellipse cx="739" cy="727" rx="10" ry="14" transform="rotate(30 739 727)" fill="#c6cbe4" />
    <path d="M722 733l12 10M736 726l12 5" strokeWidth="9" />
    <path d="M723 734l10 8M736 726l12 5" stroke="#eceefa" strokeWidth="7" />
    <path d="M725 734l-2 4M729 737l-2 4" />
    <ellipse cx="755" cy="743" rx="20" ry="26" transform="rotate(30 755 743)" fill="#e8eaf6" />
    <ellipse cx="758" cy="744" rx="19" ry="24" transform="rotate(30 758 744)" fill="#b9bfd9" />
    <path d="M749 748c5-13 18-19 26-10l4 9v20l6-2v7l-39 13-10-6v-5l16-4z" fill="#bcc2dc" />
    <path d="M749 748c6-12 15-17 23-12l-10 10-3 30-10-3z" fill="#e4e7f5" />
    <ellipse cx="768" cy="752" rx="6" ry="8" transform="rotate(20 768 752)" fill="#aab0c8" strokeWidth="1.500" />
    <ellipse cx="768" cy="753" rx="3" ry="4" fill="#eee" />
    <path d="M736 774v5l10 6v-5zM746 780l39-13" fill="#8e94aa" />
    <ellipse cx="745" cy="776" rx="5" ry="3" fill="#ddd2ca" />
    <ellipse cx="780" cy="763" rx="4" ry="3" fill="#ddd2ca" />

    {/* right arm */}
    <polygon points="709,724 716,727 706,814 696,811" fill="#9ba1b7" />
    <path d="M714 728l6 2-12 86-7 3v-3l4-2z" fill="#c6cbe4" />
    <path d="M685 814l8-5 14 5v8l-7 4-15-5z" fill="#7d8398" />
    <path d="M685 814l10-4 13 6-8 3z" fill="#c6cbe4" />
    <path d="M690 808l5-4 6 2 1 6-6 3-5-2z" fill="#cfc5be" />
    <path d="M712 770l4-2 11 6 1 4 5 4-2 5-9-4-2-4-8-4z" fill="#e8eaf6" />
    <path d="M717 781l5 2M723 773l-2 5" strokeWidth="2" />
    <circle cx="743" cy="789" r="3" fill="#fff" />
  </g>
);

const Harvester = () => (
  <svg width="830" height="690" viewBox="490 210 830 690" className="absolute top-[71px] left-[257px]" role="img" aria-label="Rice harvester assembly">
    <g fill="none" strokeLinejoin="round">
      <path d={HANDLE} stroke="#161616" strokeWidth="13" />
      <path d={HANDLE} stroke="#3b3b3b" strokeWidth="12" />
      <path d="M1102 251c8-9 18-15 33-16M1160 237c11 2 20 7 30 14M1238 372c8-10 18-16 30-17" stroke="#555" strokeWidth="3" />
      <path d="M1036 403L1163 513" stroke="#161616" strokeWidth="13" strokeLinecap="round" />
      <path d="M1036 403L1163 513" stroke="#3b3b3b" strokeWidth="12" strokeLinecap="round" />
      <path d="M1085 268l11 4M1135 231v12M1148 231v12M1196 250l-8 9M1288 331l-8 9M1285 351v12M1272 351v12M1223 386l11 5M1104 648l11 5" stroke="#000" />
    </g>
    <g transform="translate(-215 -188)">
      <Wheel back gaps={['933,770 896,757 914,738', '936,768 926,731 948,724', '947,768 958,727 980,742', '948,774 984,754 982,780']} />
    </g>

    <g stroke="#111" strokeLinejoin="round">
      <polygon points="768,796 806,784 801,823 797,823" fill="#0505a0" />
      <circle cx="787" cy="805" r="3" fill="#d8cfc8" />
      <polygon points="806,787 1118,667 1114,705 801,823" fill="#c9c900" />
      <polygon points="551,651 661,609 780,563 915,516 1050,604 1118,662 1118,667 737,811 706,786 706,783 731,774 612,668 580,675 551,654" fill="#c9c900" />
      <polygon points="551,651 661,609 780,563 915,516 1050,604 1118,662 737,807 706,783 731,773 612,665 580,672" fill="#ffff00" />
      <path d="M613 672l117 104" strokeWidth="2" />
      <path d="M1014 713v2M1013 718v2" strokeWidth="2" />
      <circle cx="822" cy="790" r="2" fill="#554" />
      <circle cx="820" cy="806" r="2" fill="#554" />
      <path d="M828 800v6M974 640l2 1M1026 614l2 1" strokeWidth="2" />
    </g>
    <Bolt x={658} y={615} />
    <Bolt x={769} y={597} />
    <Bolt x={970} y={685} />
    <Bolt x={900} y={711} />
    <Bolt x={1084} y={669} />
    <Bolt x={830} y={765} />

    <Engine />
    <Gearbox />
    <Knife />
    <Reel />
    <Wheel gaps={['930,782 892,808 902,822', '933,790 925,818 948,806', '949,775 977,764 968,785']} />
  </svg>
);

const Triad = () => (
  <svg width="60" height="60" viewBox="240 912 60 60" className="absolute bottom-[20px] left-[7px]" aria-hidden="true">
    <g strokeWidth="4">
      <path d="M274 948L256 954" stroke="#1c1cb4" />
      <path d="M274 948L287 959" stroke="#b41c1c" />
      <path d="M274 949L276 933" stroke="#1c6b1c" />
    </g>
    <path d="M250 957l9-7 3 7z" fill="#2424c8" />
    <path d="M293 964l-10-3 5-6z" fill="#d42424" />
    <path d="M277 923l4 11h-8z" fill="#1f7a2a" />
    <g fontFamily="Liberation Serif, serif" fontSize="10">
      <text x="243" y="962" fill="#0000e0">Z</text>
      <text x="290" y="969" fill="#e00000">X</text>
      <text x="274" y="923" fill="#008000">Y</text>
    </g>
  </svg>
);

export default function App() {
  return (
    <div className="flex h-screen flex-col overflow-hidden bg-white font-['Noto_Sans','Noto_Sans_CJK_SC',sans-serif] text-black">
      <TitleBar />
      <Ribbon />
      <TabRow />
      <div className="flex min-h-0 flex-1">
        <SidePanel />
        <main className="relative min-w-0 flex-1 overflow-hidden bg-white">
          <Harvester />
          <Triad />
          <div className="absolute top-[291px] left-0 flex h-[22px] w-11 items-center justify-end overflow-hidden border border-l-0 border-[#777] bg-white pr-[7px] text-[12px] whitespace-nowrap text-[#666] shadow-[3px_3px_2px_#aaa]">
            状态 1&gt;
          </div>
          <button
            aria-label="Collapse panel"
            className="absolute top-[403px] left-0 flex h-[39px] w-2 items-center justify-center border border-l-0 border-[#808080] bg-[#f7f7f7]"
          >
            <span className="size-[6px] shrink-0 rounded-full border border-[#888] bg-[#d0d0d0]" />
          </button>
        </main>
      </div>
    </div>
  );
}
